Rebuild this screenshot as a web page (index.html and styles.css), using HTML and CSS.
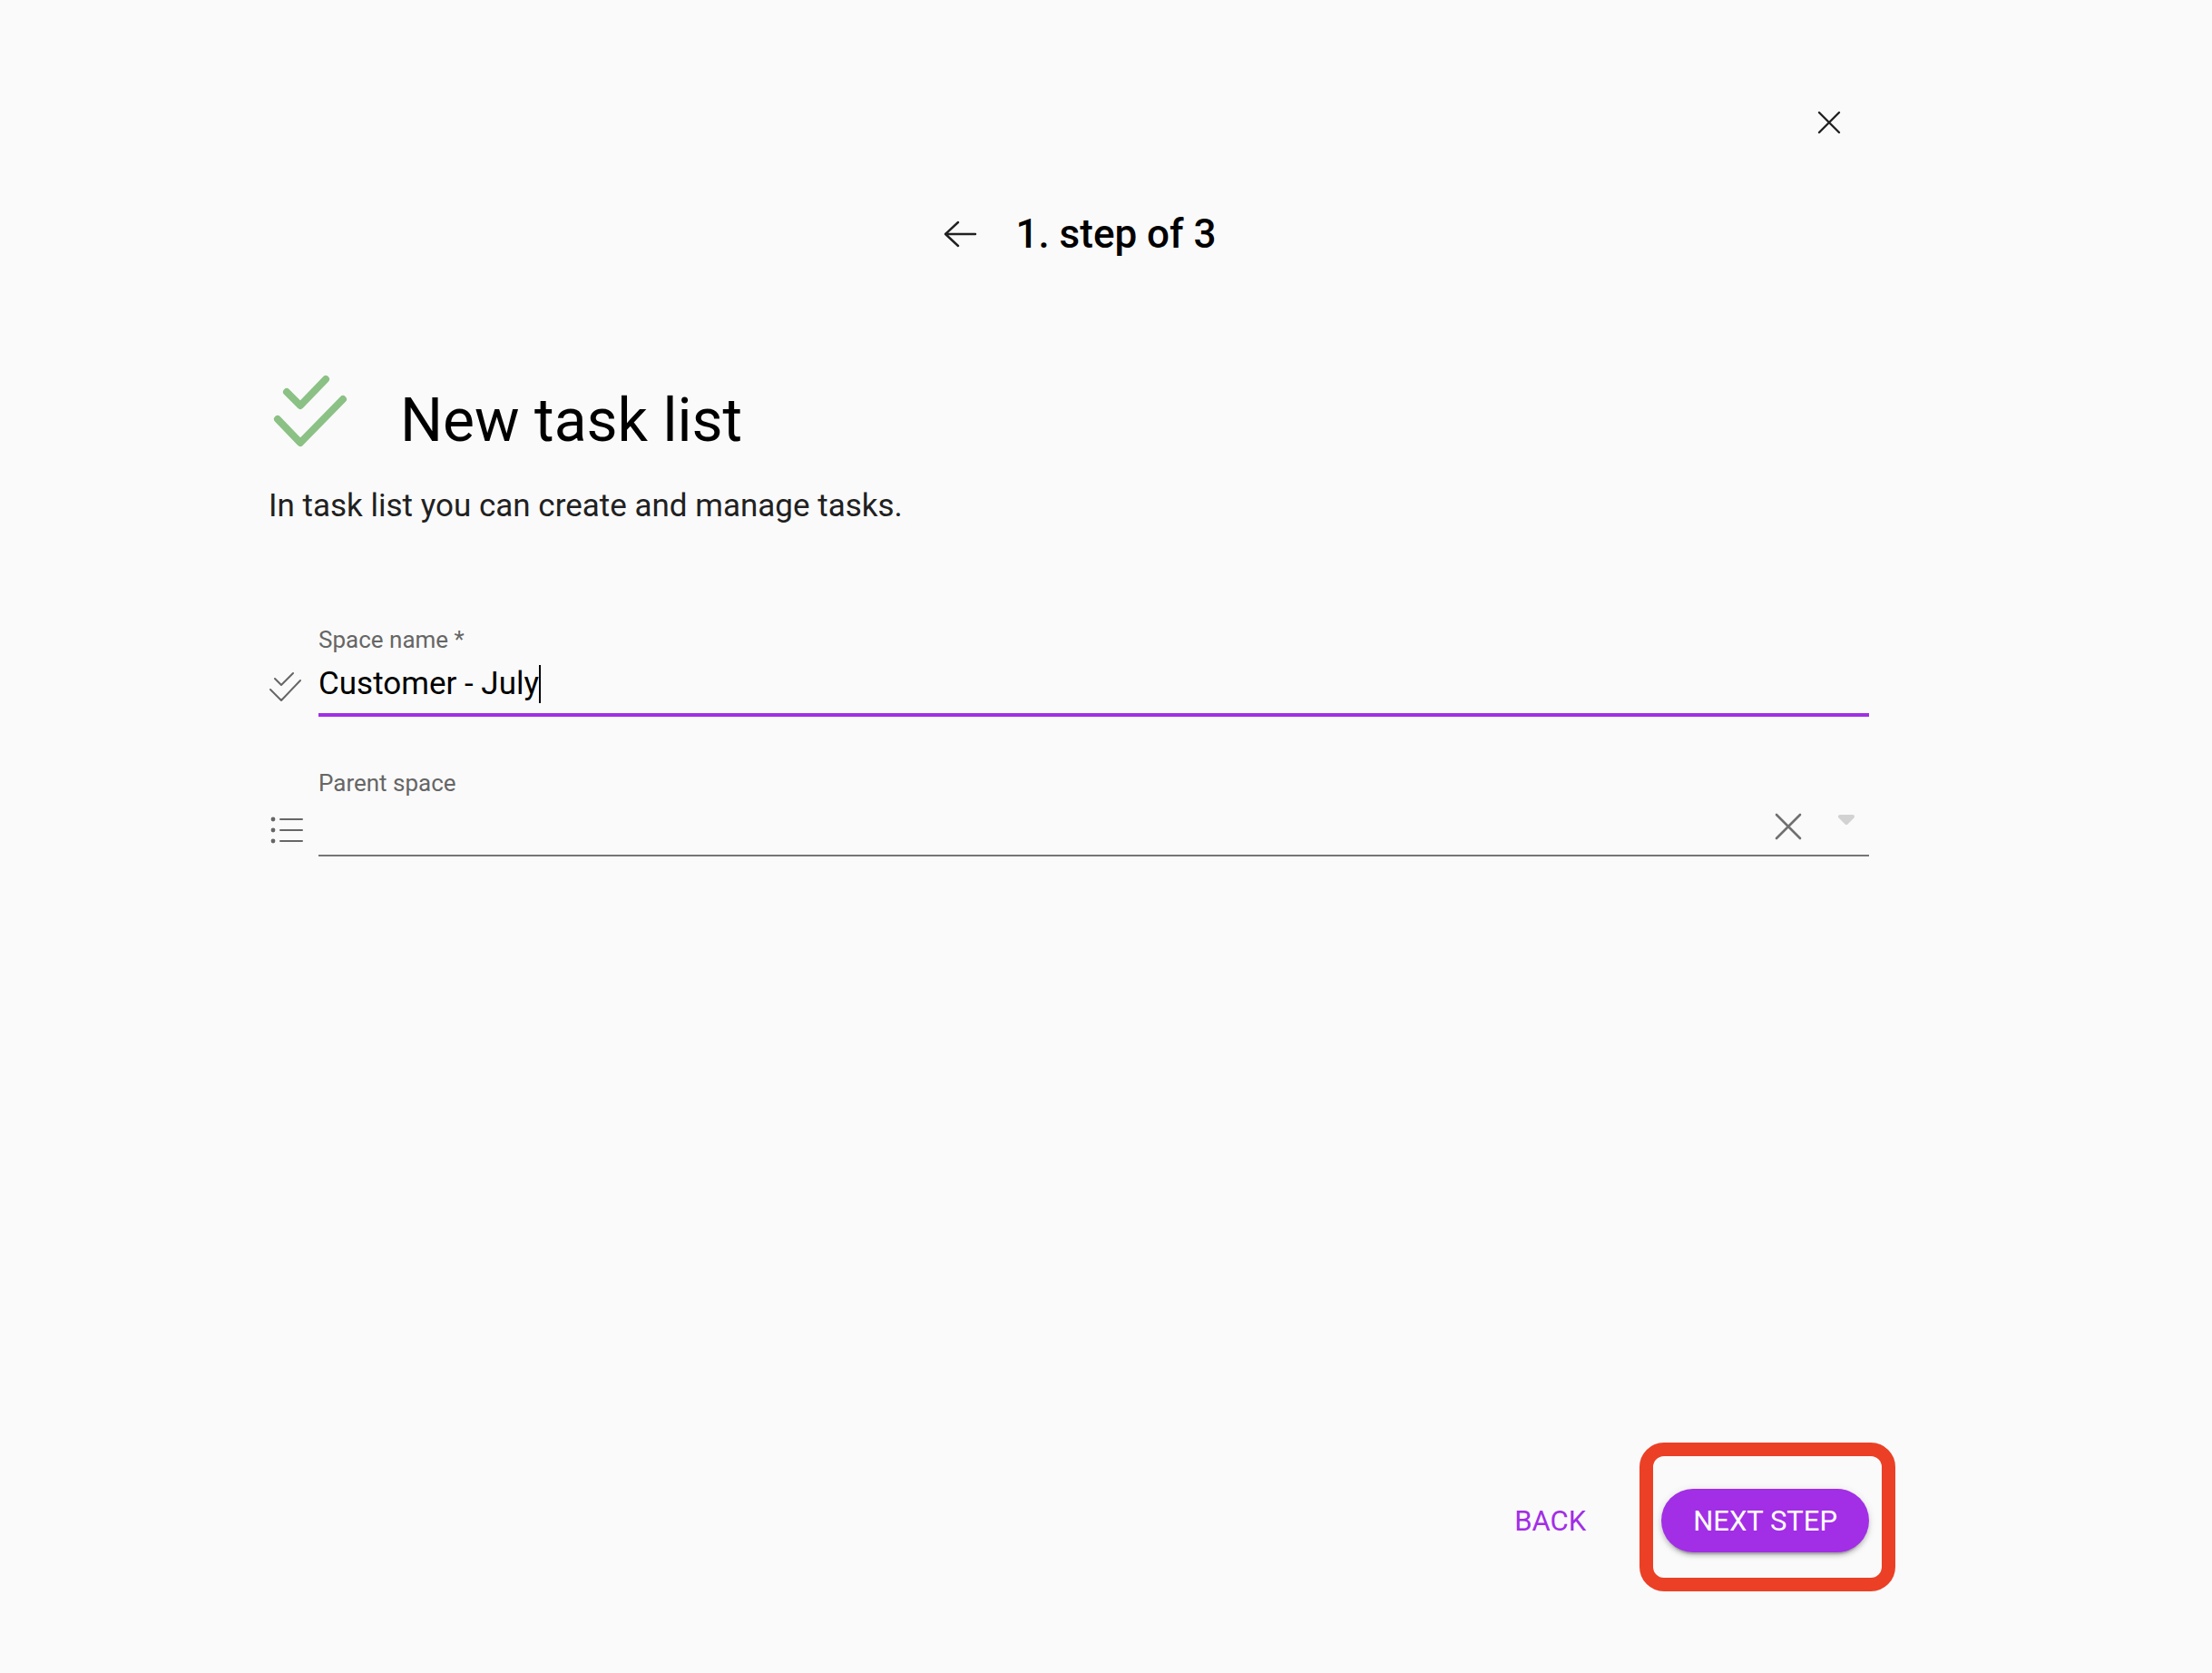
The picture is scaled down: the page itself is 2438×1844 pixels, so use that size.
FILE: index.html
```html
<!DOCTYPE html>
<html lang="en">
  <head>
    <meta charset="utf-8">
    <title>New task list</title>
    <link rel="stylesheet" href="styles.css">
  </head>
  <body>
    <form class="wizard">
      <div class="topbar">
        <button type="button" class="icon-button" aria-label="Close">
          <svg width="48" height="48" viewBox="0 0 48 48"><path d="M13 13L35 35M35 13L13 35"/></svg>
        </button>
      </div>

      <div class="steps">
        <button type="button" class="icon-button" aria-label="Previous step">
          <svg width="48" height="48" viewBox="0 0 48 48"><path d="M40 24H7M21 11L7 24L21 37"/></svg>
        </button>
        <h2>1. step of 3</h2>
      </div>

      <div class="title">
        <svg class="title-icon" width="88" height="96" viewBox="0 0 88 96"><path d="M20 24L35 39L63 10M10 54L35 80L82 32"/></svg>
        <h1>New task list</h1>
      </div>
      <p class="description">In task list you can create and manage tasks.</p>

      <div class="field">
        <svg class="field-icon" width="40" height="40" viewBox="0 0 40 40"><path d="M7 12L14 19L27 6M2 24L14 36L35 14"/></svg>
        <div class="field-body">
          <label for="name">Space name *</label>
          <div class="control">
            <input type="text" id="name" class="active" value="Customer - July">
            <span class="caret"></span>
          </div>
        </div>
      </div>

      <div class="field">
        <svg class="field-icon" width="40" height="40" viewBox="0 0 40 40">
          <path d="M13 13H37M13 25H37M13 37H37"/>
          <g class="dots"><circle cx="5" cy="13" r="2.4"/><circle cx="5" cy="25" r="2.4"/><circle cx="5" cy="37" r="2.4"/></g>
        </svg>
        <div class="field-body">
          <label for="parent">Parent space</label>
          <div class="control">
            <select id="parent"><option></option></select>
            <div class="select-icons">
              <button type="button" class="clear" aria-label="Clear">
                <svg width="40" height="40" viewBox="0 0 40 40"><path d="M7 7L33 33M33 7L7 33"/></svg>
              </button>
              <svg class="arrow" width="20" height="12" viewBox="0 0 20 12"><path d="M3 2H17L10 9Z"/></svg>
            </div>
          </div>
        </div>
      </div>

      <div class="actions">
        <button type="button" class="button">BACK</button>
        <div class="highlight">
          <button type="submit" class="button primary">NEXT STEP</button>
        </div>
      </div>
    </form>
  </body>
</html>
```

FILE: styles.css
```css
* {
  box-sizing: border-box;
}
body {
  margin: 0;
  background: #fafafa;
  color: #000;
  font-family: Roboto, sans-serif;
}
h1, h2, p {
  margin: 0;
}
button {
  padding: 0;
  border: 0;
  background: none;
  font-family: inherit;
  cursor: pointer;
}
svg {
  display: block;
  fill: none;
  stroke-linecap: round;
  stroke-linejoin: round;
}

.wizard {
  display: flex;
  flex-direction: column;
  min-height: 100vh;
  padding: 111px 378px 133px 296px;
}
.topbar {
  display: flex;
  justify-content: flex-end;
  padding-right: 20px;
}
.icon-button {
  stroke: #212121;
  stroke-width: 2.4;
}

.steps {
  display: flex;
  align-items: center;
  justify-content: center;
  gap: 36px;
  margin-top: 69px;
  padding-left: 20px;
}
.steps h2 {
  font-size: 44px;
  font-weight: 500;
  line-height: 60px;
}

.title {
  display: flex;
  align-items: flex-end;
  gap: 57px;
  margin-top: 120px;
}
.title h1 {
  font-size: 66px;
  font-weight: 400;
  line-height: 80px;
}
.title-icon {
  stroke: #8bc185;
  stroke-width: 8;
}
.description {
  margin-top: 30px;
  margin-bottom: 50px;
  color: #212121;
  font-size: 35px;
  line-height: 48px;
}

.field {
  display: flex;
  align-items: flex-end;
  gap: 15px;
  margin-top: 57px;
}
.field-icon {
  margin-bottom: 14px;
  stroke: #666;
  stroke-width: 2;
}
.dots {
  fill: #666;
  stroke: none;
}
.field-body {
  flex: 1;
}
.field label {
  display: block;
  color: #666;
  font-size: 26px;
  line-height: 32px;
}
.control {
  position: relative;
}
.control input, .control select {
  display: block;
  width: 100%;
  height: 65px;
  padding: 0;
  border: 0;
  border-bottom: 2px solid #757575;
  border-radius: 0;
  outline: 0;
  background: none;
  color: #000;
  font-family: inherit;
  font-size: 35px;
  appearance: none;
}
.control input.active {
  height: 69px;
  border-bottom: 4px solid #a22ee6;
}
/* text cursor at the end of the name */
.caret {
  position: absolute;
  top: 12px;
  left: 243px;
  width: 2px;
  height: 42px;
  background: #000;
}
.select-icons {
  position: absolute;
  top: 12px;
  right: 15px;
  display: flex;
  gap: 34px;
}
.clear {
  stroke: #707070;
  stroke-width: 2.6;
}
.arrow {
  margin-top: 7px;
  fill: #d2d2d2;
  stroke: #d2d2d2;
  stroke-width: 4;
}

.actions {
  display: flex;
  align-items: center;
  justify-content: flex-end;
  gap: 48px;
  margin-top: auto;
}
.button {
  height: 70px;
  padding: 0 35px;
  border-radius: 35px;
  color: #a22ee6;
  font-size: 31px;
}
.primary {
  background: #a22ee6;
  color: #fff;
  box-shadow: 0 6px 2px -4px rgba(0,0,0,.2), 0 4px 4px rgba(0,0,0,.14), 0 2px 10px rgba(0,0,0,.12);
}
.highlight {
  position: relative;
}
.highlight::after {
  content: "";
  position: absolute;
  top: -51px;
  right: -29px;
  bottom: -43px;
  left: -24px;
  border: 15px solid #eb4026;
  border-radius: 27px;
  pointer-events: none;
}
```
